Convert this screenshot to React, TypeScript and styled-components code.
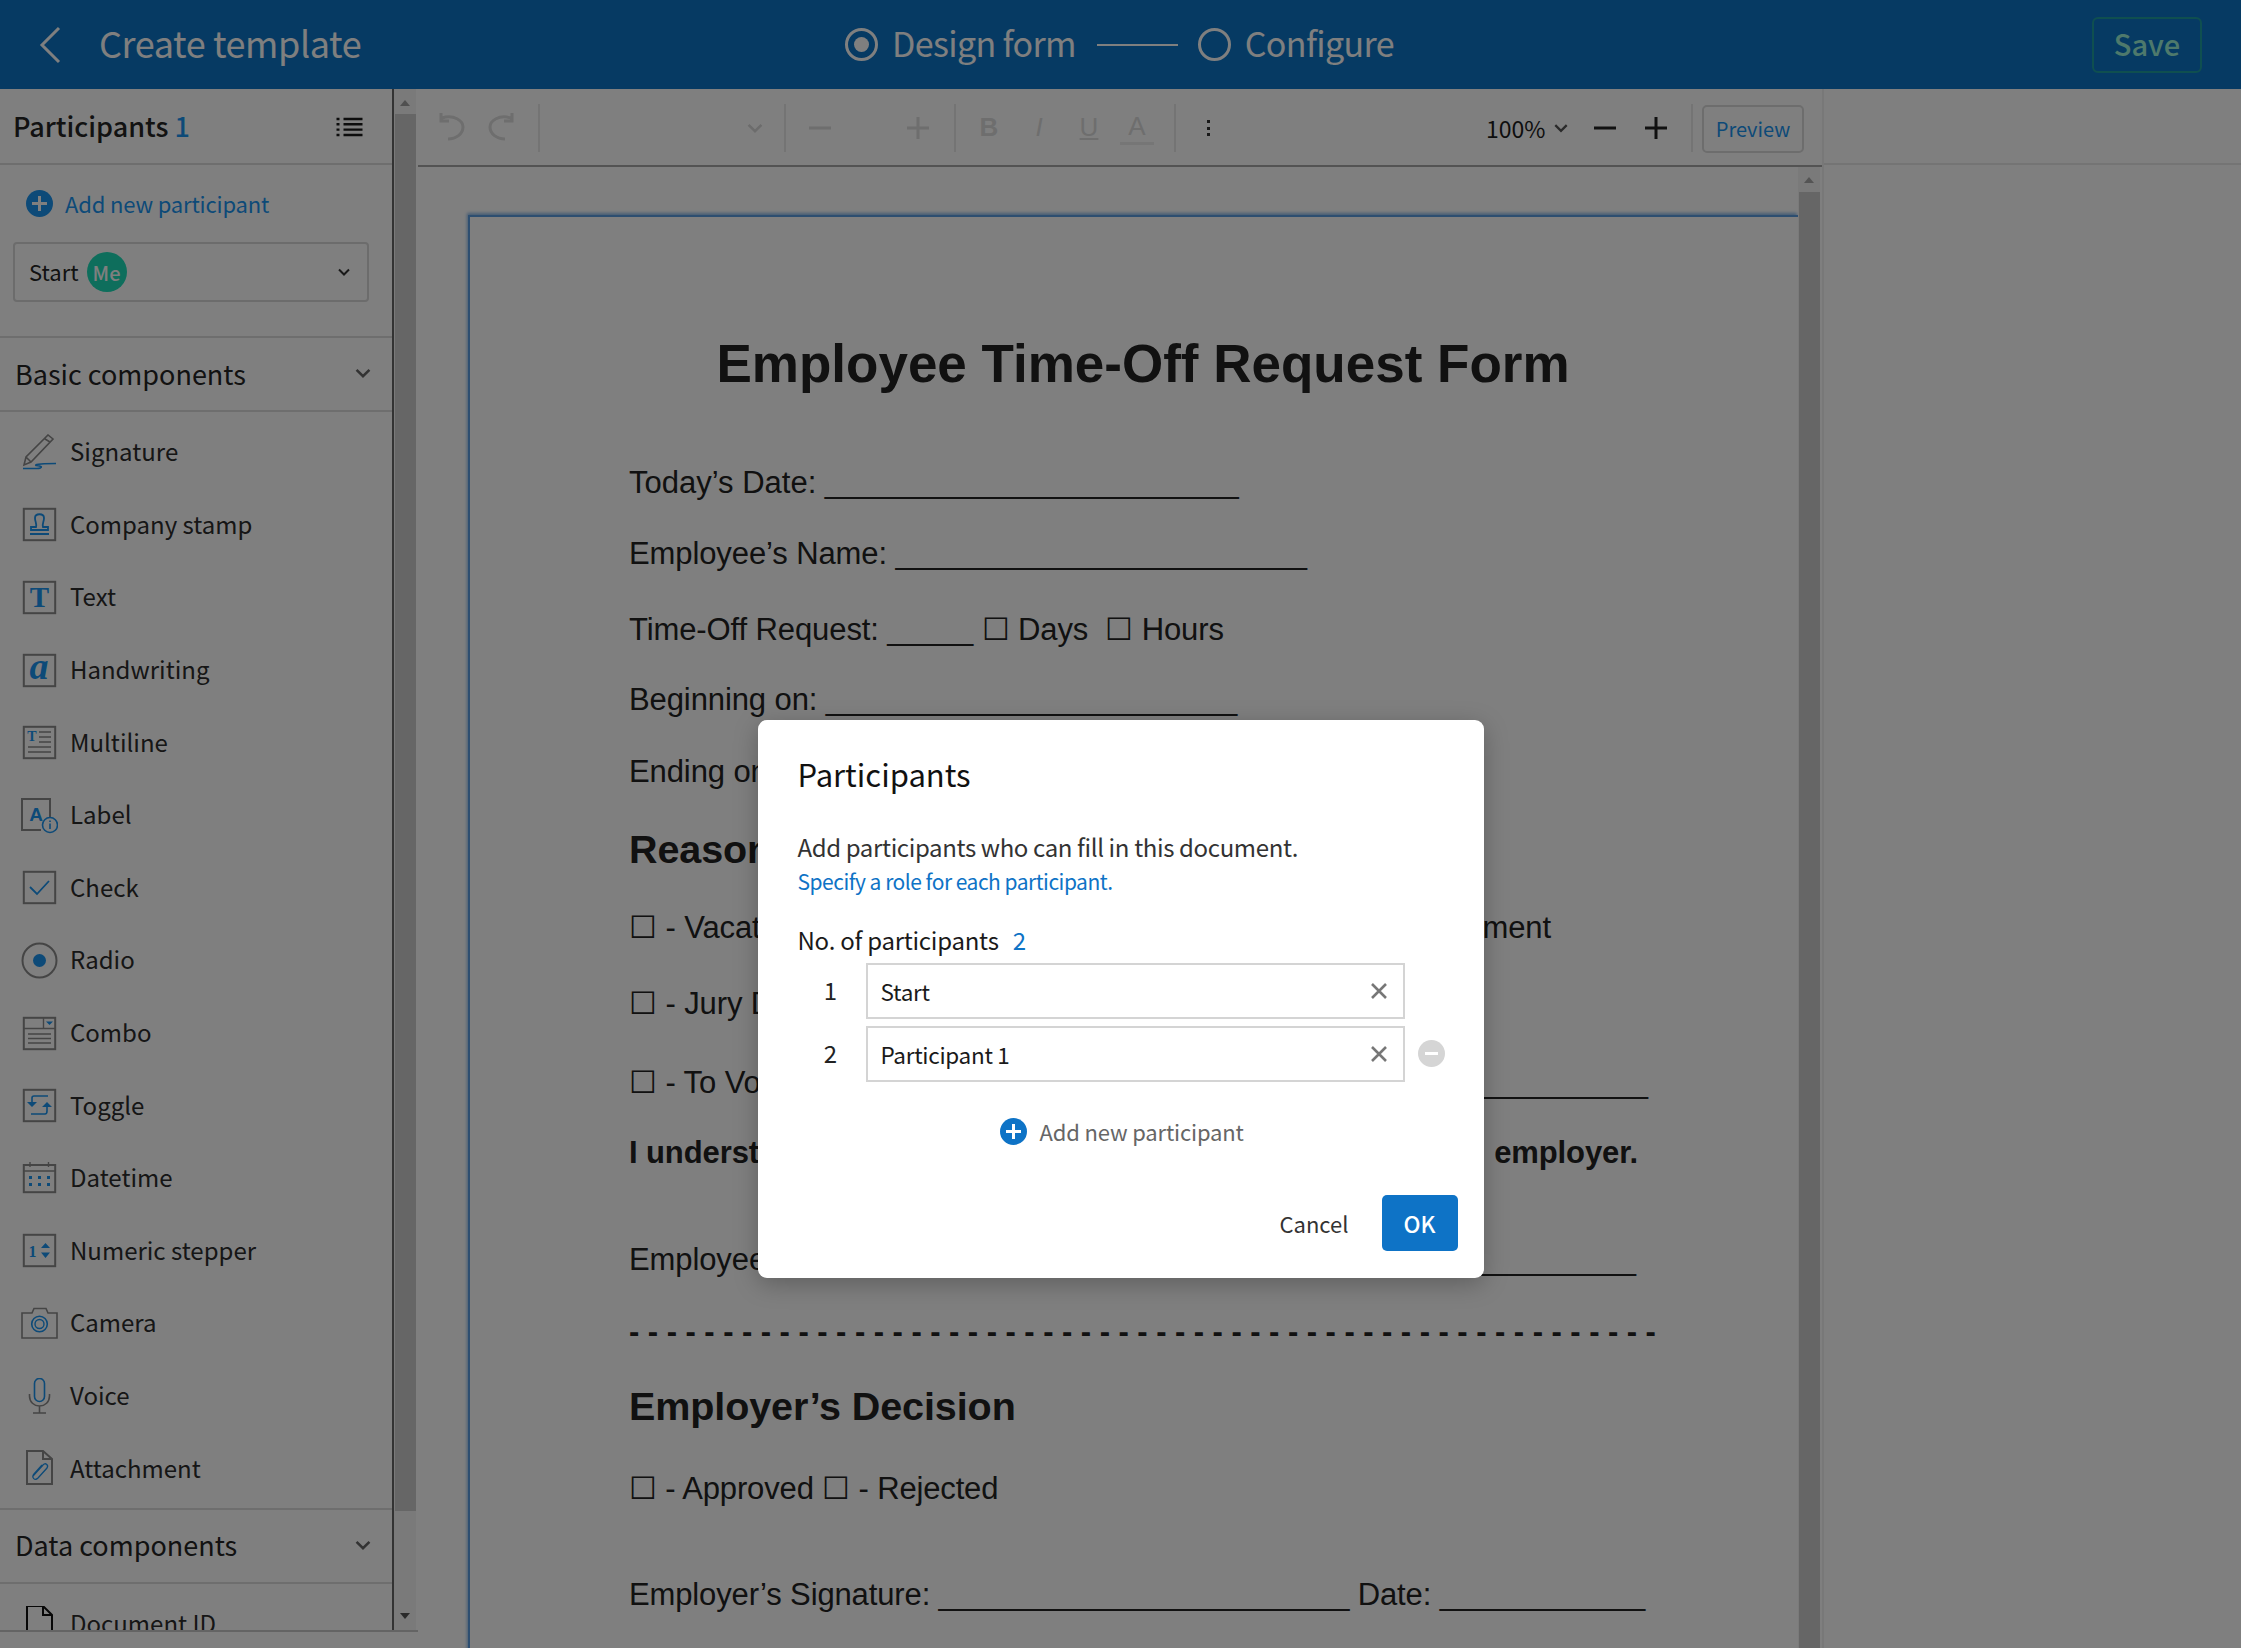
import styled, { createGlobalStyle } from 'styled-components'
import type { FC, ReactNode } from 'react'

// everything sits under a 50% black overlay, so source colours are twice what shows
const FRAME = '#8a8a8a'
const ACCENT = '#1a94f0'
const SANS = '"Noto Sans CJK JP", "Noto Sans", sans-serif'
const DOC = '"Liberation Sans", Arial, sans-serif'

const GlobalStyle = createGlobalStyle`
  html, body {
    margin: 0;
    padding: 0;
    background: #fff;
  }
  * {
    box-sizing: border-box;
  }
`

const Page = styled.div`
  position: relative;
  width: 2241px;
  height: 1648px;
  overflow: hidden;
  display: flex;
  flex-direction: column;
  font-family: ${SANS};
  color: #242424;
`

const Header = styled.header`
  height: 89px;
  flex: none;
  background: #0c74c6;
  display: grid;
  grid-template-columns: 845px 1fr auto;
  align-items: center;
  color: #fff;
`

const TitleGroup = styled.div`
  display: flex;
  align-items: center;
  padding-left: 38px;
  gap: 37px;
`

const HeaderTitle = styled.div`
  font-size: 36px;
  line-height: 44px;
  letter-spacing: -0.4px;
  white-space: nowrap;
  padding-bottom: 5px;
`

const Steps = styled.div`
  display: flex;
  align-items: center;
`

const StepLabel = styled.span`
  font-size: 34px;
  line-height: 44px;
  letter-spacing: -0.65px;
  margin-left: 14px;
  padding-bottom: 3px;
  white-space: nowrap;
`

const StepRadio = styled.span<{ $on?: boolean }>`
  width: 33px;
  height: 33px;
  border-radius: 50%;
  border: 3px solid #fff;
  display: flex;
  align-items: center;
  justify-content: center;

  &::after {
    content: '';
    width: 15px;
    height: 15px;
    border-radius: 50%;
    background: ${p => (p.$on ? '#fff' : 'transparent')};
  }
`

const StepLine = styled.span`
  width: 81px;
  height: 2px;
  background: #fff;
  margin: 0 20px 0 21px;
`

const SaveButton = styled.button`
  width: 110px;
  height: 56px;
  margin-right: 39px;
  border: 2px solid #1f9ea0;
  border-radius: 6px;
  background: transparent;
  color: #9cf2d8;
  font-family: ${SANS};
  font-size: 29px;
  font-weight: 500;
  padding: 0 0 3px;
`

const Workspace = styled.div`
  flex: 1;
  min-height: 0;
  display: flex;
`

const LeftColumn = styled.div`
  width: 418px;
  flex: none;
  display: flex;
  flex-direction: column;
`

const LeftMain = styled.div`
  height: 1543px;
  flex: none;
  display: flex;
  border-bottom: 2px solid #c8c8c8;
`

const Sidebar = styled.aside`
  width: 394px;
  flex: none;
  border-right: 2px solid #666;
  overflow: hidden;
`

const SideHead = styled.div`
  height: 76px;
  border-bottom: 2px solid #dcdcdc;
  padding: 0 29px 0 13px;
  display: flex;
  align-items: center;
  justify-content: space-between;
`

const SideTitle = styled.div`
  font-size: 27px;
  line-height: 40px;
  font-weight: 500;
`

const Count = styled.span`
  color: ${ACCENT};
  margin-left: 6px;
`

const ListIcon = styled.svg`
  width: 27px;
  height: 20px;
  margin-top: 2px;
  fill: none;
  stroke: #1a1a1a;
  stroke-width: 2.4;
`

const AddLink = styled.div`
  display: flex;
  align-items: center;
  gap: 12px;
  padding: 10px 0 0 26px;
  height: 66px;
  font-size: 22px;
  letter-spacing: -0.15px;
  color: ${ACCENT};
`

const PlusCircle = styled.span<{ $color: string }>`
  position: relative;
  width: 27px;
  height: 27px;
  flex: none;
  border-radius: 50%;
  background: ${p => p.$color};

  &::before,
  &::after {
    content: '';
    position: absolute;
    background: #fff;
    left: 6px;
    right: 6px;
    top: 12px;
    bottom: 12px;
  }
  &::after {
    left: 12px;
    right: 12px;
    top: 6px;
    bottom: 6px;
  }
`

const ParticipantSelect = styled.div`
  margin: 11px 23px 0 13px;
  height: 60px;
  border: 2px solid #d8d8d8;
  border-radius: 4px;
  padding: 0 16px 0 14px;
  display: flex;
  align-items: center;
  font-size: 22px;
`

const SelectName = styled.span`
  margin-top: -2px;
`

const MeBadge = styled.span`
  width: 40px;
  height: 40px;
  margin-left: 8px;
  border-radius: 50%;
  background: #1cdcb8;
  color: #fff;
  font-size: 20px;
  font-weight: 500;
  display: flex;
  align-items: center;
  justify-content: center;
`

const Spacer = styled.span`
  flex: 1;
`

const SectionHead = styled.div<{ $spaced?: boolean }>`
  height: 76px;
  margin-top: ${p => (p.$spaced ? '34px' : '0')};
  border-top: 2px solid #dcdcdc;
  border-bottom: 2px solid #dcdcdc;
  padding: 0 20px 2px 15px;
  display: flex;
  align-items: center;
  justify-content: space-between;
  font-size: 27px;
`

const ToolList = styled.div<{ $pad: number }>`
  padding: 4px 0 ${p => p.$pad}px;
`

const ToolRow = styled.div`
  height: 72.6px;
  padding-left: 21px;
  display: flex;
  align-items: center;
  gap: 12px;
  font-size: 24px;
  color: #2c2c2c;
`

const ToolName = styled.span`
  margin-top: -3px;
`

const ToolIcon = styled.svg`
  width: 37px;
  height: 37px;
  flex: none;
  fill: none;
  stroke: ${FRAME};
  stroke-width: 2;
`

const Rail = styled.div<{ $gap?: number }>`
  position: relative;
  width: 22px;
  flex: none;
  margin-right: ${p => p.$gap ?? 0}px;
  background: #f4f4f4;
`

const RailThumb = styled.div<{ $top: number; $bottom: number }>`
  position: absolute;
  left: 1px;
  right: 0;
  top: ${p => p.$top}px;
  bottom: ${p => p.$bottom}px;
  background: #cdcdcd;
`

const RailArrow = styled.div<{ $at: 'top' | 'bottom'; $offset: number; $color: string }>`
  position: absolute;
  left: 6px;
  ${p => p.$at}: ${p => p.$offset}px;
  width: 0;
  height: 0;
  border-left: 5px solid transparent;
  border-right: 5px solid transparent;
  ${p => (p.$at === 'top' ? 'border-bottom' : 'border-top')}: 6px solid ${p => p.$color};
`

const Editor = styled.main`
  width: 1404px;
  flex: none;
  display: flex;
  flex-direction: column;
`

const Toolbar = styled.div`
  height: 78px;
  flex: none;
  border-bottom: 2px solid #a6a6a6;
  display: flex;
  align-items: center;
  padding-top: 1px;
`

const ToolGroup = styled.div<{ $width: number }>`
  width: ${p => p.$width}px;
  height: 48px;
  flex: none;
  display: flex;
  align-items: center;
`

const ToolSep = styled.span`
  width: 2px;
  height: 48px;
  flex: none;
  background: #e8e8e8;
`

const FaintSvg = styled.svg`
  flex: none;
  fill: none;
  stroke: #dcdcdc;
  stroke-width: 3;
`

const DarkSvg = styled.svg<{ $left: number }>`
  flex: none;
  margin-left: ${p => p.$left}px;
  stroke: #222;
  stroke-width: 3;
`

const DotsSvg = styled.svg`
  fill: #333;
`

const FaintGlyph = styled.span<{ $w: number; $italic?: boolean; $bold?: boolean }>`
  width: ${p => p.$w}px;
  flex: none;
  text-align: center;
  font-family: ${DOC};
  font-size: 26px;
  color: #dcdcdc;
  font-style: ${p => (p.$italic ? 'italic' : 'normal')};
  font-weight: ${p => (p.$bold ? 700 : 400)};
`

const UnderGlyph = styled(FaintGlyph)`
  text-decoration: underline;
`

const ColorGlyph = styled(FaintGlyph)`
  border-bottom: 3px solid #ececec;
  line-height: 32px;
  margin-left: -2px;
`

const ChevronSlot = styled.span<{ $left: number; $right: number }>`
  display: flex;
  margin: 0 ${p => p.$right}px 0 ${p => p.$left}px;
`

const Zoom = styled.span`
  font-size: 23px;
  color: #1c1c1c;
  white-space: nowrap;
`

const PreviewButton = styled.button`
  width: 102px;
  height: 48px;
  padding: 0;
  margin: 2px 0 0 9px;
  border: 2px solid #dadada;
  border-radius: 5px;
  background: transparent;
  color: ${ACCENT};
  font-family: ${SANS};
  font-size: 20px;
`

const DocArea = styled.div`
  flex: 1;
  min-height: 0;
  display: flex;
  justify-content: flex-end;
`

const SheetWrap = styled.div`
  flex: 1;
  overflow: hidden;
  padding: 48px 0 0 50px;
`

const Sheet = styled.div`
  height: 1500px;
  background: #fff;
  border-top: 2px solid #5a9ce0;
  border-left: 2px solid #5a9ce0;
  box-shadow: -1px -2px 3px rgba(90, 156, 224, 0.7);
  padding: 117px 0 0 159px;
  font-family: ${DOC};
  color: #222;
`

const DocTitle = styled.div`
  width: 1000px;
  height: 60px;
  margin-left: 14px;
  text-align: center;
  font-size: 53px;
  line-height: 60px;
  font-weight: 700;
  white-space: nowrap;
`

const DocLine = styled.div<{ $top: number; $bold?: boolean; $size?: number; $width?: number; $tight?: number }>`
  height: 40px;
  width: ${p => (p.$width ? `${p.$width}px` : 'auto')};
  margin-top: ${p => p.$top}px;
  display: flex;
  justify-content: space-between;
  font-size: ${p => p.$size ?? 31}px;
  line-height: 40px;
  letter-spacing: ${p => p.$tight ?? -0.1}px;
  font-weight: ${p => (p.$bold ? 700 : 400)};
  white-space: pre;
`

const RightPanel = styled.aside`
  flex: 1;
  border-left: 2px solid #f0f0f0;
`

const RightHead = styled.div`
  height: 76px;
  border-bottom: 2px solid #e8e8e8;
`

const Overlay = styled.div`
  position: absolute;
  inset: 0;
  background: rgba(0, 0, 0, 0.5);
  display: flex;
  justify-content: center;
  align-items: flex-start;
  padding-top: 720px;
`

const Modal = styled.div`
  width: 726px;
  height: 558px;
  background: #fff;
  border-radius: 9px;
  box-shadow: 0 6px 24px rgba(0, 0, 0, 0.25);
  padding: 33px 27px 0 40px;
  display: flex;
  flex-direction: column;
`

const ModalTitle = styled.h2`
  margin: 0;
  font-size: 31px;
  line-height: 42px;
  font-weight: 400;
  color: #111;
`

const ModalText = styled.p`
  margin: 33px 0 0;
  font-size: 24px;
  line-height: 38px;
  letter-spacing: -0.37px;
  color: #333;
`

const ModalLink = styled.a`
  display: block;
  font-size: 21px;
  line-height: 30px;
  letter-spacing: -0.5px;
  color: #0e73c6;
`

const CountRow = styled.div`
  margin-top: 28px;
  height: 32px;
  font-size: 24px;
  line-height: 32px;
  letter-spacing: -0.25px;
  color: #1a1a1a;
  display: flex;
  gap: 14px;
`

const CountValue = styled.span`
  color: #0e73c6;
`

const FieldRow = styled.div`
  height: 56px;
  margin-top: 7px;
  display: flex;
  align-items: center;
`

const FieldNumber = styled.span`
  width: 68px;
  padding: 0 2px 3px 0;
  text-align: center;
  font-size: 24px;
  color: #222;
`

const FieldBox = styled.div`
  width: 539px;
  height: 56px;
  border: 2px solid #d4d4d4;
  padding: 0 14px 0 13px;
  display: flex;
  align-items: center;
  justify-content: space-between;
  font-size: 22.5px;
  letter-spacing: -0.3px;
  color: #1a1a1a;
`

const ClearX = styled.svg`
  width: 20px;
  height: 20px;
  stroke: #777;
  stroke-width: 2.6;
  fill: none;
`

const RemoveCircle = styled.span`
  position: relative;
  width: 27px;
  height: 27px;
  margin: -2px 0 0 13px;
  border-radius: 50%;
  background: #d5d5d5;

  &::after {
    content: '';
    position: absolute;
    left: 7px;
    right: 7px;
    top: 12px;
    height: 3px;
    background: #fff;
  }
`

const AddRow = styled.div`
  margin-top: 33px;
  height: 32px;
  padding-left: 202px;
  display: flex;
  align-items: center;
  gap: 13px;
  font-size: 22px;
  letter-spacing: -0.15px;
  color: #666;
`

const ModalActions = styled.div`
  margin: 48px -1px 0 0;
  display: flex;
  justify-content: flex-end;
  align-items: center;
  gap: 33px;
`

const CancelButton = styled.button`
  border: 0;
  padding: 0;
  background: none;
  font-family: ${SANS};
  font-size: 22px;
  color: #333;
`

const OkButton = styled.button`
  width: 76px;
  height: 56px;
  padding: 0;
  border: 0;
  border-radius: 5px;
  background: #0e73c6;
  color: #fff;
  font-family: ${SANS};
  font-size: 22.5px;
  font-weight: 500;
`

const Chevron: FC<{ size?: number; color?: string; width?: number }> = ({ size = 14, color = '#555', width = 2 }) => (
  <svg width={size} height={size} viewBox="0 0 14 14" fill="none" stroke={color} strokeWidth={width}>
    <path d="M2 4.5 L7 9.5 L12 4.5" />
  </svg>
)

const Frame = () => <rect x="0.8" y="0.8" width="31.4" height="31.4" />

const IconText: FC<{ x: number; y: number; size: number; family?: string; italic?: boolean; children: string }> = ({ x, y, size, family = 'Liberation Serif', italic, children }) => (
  <text x={x} y={y} fontSize={size} fontFamily={family} fontWeight="700" fontStyle={italic ? 'italic' : 'normal'} fill={ACCENT} stroke="none" textAnchor="middle">
    {children}
  </text>
)

const toolIcons: Record<string, ReactNode> = {
  Signature: (
    <>
      <path d="M1 29 L3 21 L25 -1 L30 3 L8 26 Z M3 21 L8 26 M22 3 L27 6" strokeWidth="1.6" />
      <path d="M0 32.5 H14 C20 32 20 30 13 29.5 C11 28 22 27.5 33 27.5" stroke={ACCENT} strokeWidth="1.6" />
    </>
  ),
  'Company stamp': (
    <>
      <Frame />
      <path d="M13 19 C14 15 12 14 12 10 C12 5 21 5 21 10 C21 14 19 15 20 19 H25 V22 H8 V19 Z M7 26 H26" stroke={ACCENT} strokeWidth="1.8" />
    </>
  ),
  Text: (
    <>
      <Frame />
      <IconText x={16.5} y={26} size={29}>T</IconText>
    </>
  ),
  Handwriting: (
    <>
      <Frame />
      <IconText x={16} y={25} size={38} italic>a</IconText>
    </>
  ),
  Multiline: (
    <>
      <Frame />
      <IconText x={9} y={15} size={14}>T</IconText>
      <path d="M16 6 H28 M16 11 H28 M16 16 H28 M5 21 H28 M5 26 H28" strokeWidth="1.4" />
    </>
  ),
  Label: (
    <>
      <path d="M27 18 V0 H-1 V31 H18" />
      <IconText x={13} y={22} size={19} family="Liberation Sans">A</IconText>
      <circle cx="27" cy="26" r="7.5" stroke={ACCENT} strokeWidth="1.6" />
      <path d="M27 24.5 V30 M27 21.5 V23" stroke={ACCENT} strokeWidth="1.6" />
    </>
  ),
  Check: (
    <>
      <Frame />
      <path d="M7 16 L14 23 L26 10" stroke={ACCENT} strokeWidth="1.8" />
    </>
  ),
  Radio: (
    <>
      <circle cx="16.5" cy="16.5" r="17" />
      <circle cx="16.5" cy="16.5" r="6.5" fill={ACCENT} stroke="none" />
    </>
  ),
  Combo: (
    <>
      <Frame />
      <path d="M0.8 11.5 H32 M20.5 1 V11.5 M5 17 H28 M5 21.5 H28 M5 26 H28" strokeWidth="1.4" />
      <path d="M23 4.5 H30 L26.5 8 Z" fill={ACCENT} stroke="none" />
    </>
  ),
  Toggle: (
    <>
      <Frame />
      <path d="M9 14 V9 C9 7.5 10 7 11 7 H25 M24 16 V22 C24 24 23 25 22 25 H8" stroke={ACCENT} strokeWidth="1.6" />
      <path d="M4 13 H14 L9 18 Z M19 18 H29 L24 13 Z" fill={ACCENT} stroke="none" />
    </>
  ),
  Datetime: (
    <>
      <rect x="0.8" y="3" width="31.4" height="27.2" />
      <path d="M0.8 9 H32 M7 0 V5 M25.5 0 V5" strokeWidth="1.4" />
      <path d="M6 14 h3 v3 h-3 Z M15 14 h3 v3 h-3 Z M24 14 h3 v3 h-3 Z M6 21 h3 v3 h-3 Z M15 21 h3 v3 h-3 Z M24 21 h3 v3 h-3 Z" fill={ACCENT} stroke="none" />
    </>
  ),
  'Numeric stepper': (
    <>
      <Frame />
      <IconText x={9.5} y={23} size={16}>1</IconText>
      <path d="M18 14 L22.5 9 L27 14 Z M18 18.5 H27 L22.5 24 Z" fill={ACCENT} stroke="none" />
    </>
  ),
  Camera: (
    <>
      <path d="M-1 6 H9 L11 1.5 H23 L25 6 H34 V31 H-1 Z" strokeWidth="1.6" />
      <circle cx="16.5" cy="17" r="7.8" stroke={ACCENT} strokeWidth="1.6" />
      <circle cx="16.5" cy="17" r="4.5" stroke={ACCENT} strokeWidth="1.4" />
    </>
  ),
  Voice: (
    <>
      <rect x="11.5" y="-1.5" width="10" height="23" rx="5" stroke={ACCENT} strokeWidth="1.6" />
      <path d="M6.5 14 V16 C6.5 22 11 26 16.5 26 C22 26 26.5 22 26.5 16 V14 M16.5 26 V33 M10 33 H23" strokeWidth="1.6" />
    </>
  ),
  Attachment: (
    <>
      <path d="M4 -1 H20 L29 7 V32 H4 Z M20 -1 V7 H29" />
      <path d="M10 24 L20 13 C22 10 26 13 24 16 L15 26 C12 29 8 26 11 22 L19 13" stroke={ACCENT} strokeWidth="1.3" />
    </>
  ),
  'Document ID': (
    <path d="M4 -2 H20 L29 7 V34 M4 -2 V34 M20 -2 V7 H29" stroke="#111" />
  ),
}

const basicComponents = [
  'Signature',
  'Company stamp',
  'Text',
  'Handwriting',
  'Multiline',
  'Label',
  'Check',
  'Radio',
  'Combo',
  'Toggle',
  'Datetime',
  'Numeric stepper',
  'Camera',
  'Voice',
  'Attachment',
]

type DocRow = { top: number; text: string; end?: string; bold?: boolean; size?: number; width?: number; tight?: number }

const under = (n: number) => '_'.repeat(n)

const docRows: DocRow[] = [
  { top: 69, text: `Today\u2019s Date: ${under(24)}`, tight: 0 },
  { top: 31, text: `Employee\u2019s Name: ${under(24)}` },
  { top: 36, text: `Time-Off Request: ${under(5)} \u2610 Days  \u2610 Hours`, tight: -0.1 },
  { top: 30, text: `Beginning on: ${under(24)}` },
  { top: 32, text: `Ending on: ${under(24)}` },
  { top: 37, text: 'Reason for Request:', bold: true, size: 39.5 },
  { top: 39, text: '\u2610 - Vacation', end: '\u2610 - Medical Appointment', width: 922 },
  { top: 36, text: '\u2610 - Jury Duty' },
  { top: 39, text: '\u2610 - To Vote', end: under(50), width: 1019 },
  { top: 30, text: 'I understand this request is subject to approval by', end: 'employer.', bold: true, width: 1009 },
  { top: 67, text: 'Employee\u2019s Signature:', end: under(40), width: 1007 },
  { top: 32, text: '- '.repeat(55).trim(), bold: true, tight: -0.055 },
  { top: 34, text: 'Employer\u2019s Decision', bold: true, size: 39.5 },
  { top: 43, text: '\u2610 - Approved \u2610 - Rejected', tight: -0.15 },
  { top: 66, text: `Employer\u2019s Signature: ${under(24)} Date: ${under(12)}`, tight: -0.13 },
]

export default function App() {
  return (
    <Page>
      <GlobalStyle />
      <Header>
        <TitleGroup>
          <svg width="24" height="38" viewBox="0 0 24 38" fill="none" stroke="#fff" strokeWidth="3">
            <path d="M21 2 L4 19 L21 36" />
          </svg>
          <HeaderTitle>Create template</HeaderTitle>
        </TitleGroup>
        <Steps>
          <StepRadio $on />
          <StepLabel>Design form</StepLabel>
          <StepLine />
          <StepRadio />
          <StepLabel>Configure</StepLabel>
        </Steps>
        <SaveButton>Save</SaveButton>
      </Header>

      <Workspace>
        <LeftColumn>
          <LeftMain>
            <Sidebar>
              <SideHead>
                <SideTitle>
                  Participants<Count>1</Count>
                </SideTitle>
                <ListIcon viewBox="0 0 26 20">
                  <path d="M7 2 H26 M7 7.3 H26 M7 12.6 H26 M7 18 H26 M0 2 H3 M0 7.3 H3 M0 12.6 H3 M0 18 H3" />
                </ListIcon>
              </SideHead>
              <AddLink>
                <PlusCircle $color={ACCENT} />
                Add new participant
              </AddLink>
              <ParticipantSelect>
                <SelectName>Start</SelectName>
                <MeBadge>Me</MeBadge>
                <Spacer />
                <Chevron size={14} color="#333" />
              </ParticipantSelect>
              <SectionHead $spaced>
                Basic components
                <Chevron size={18} color="#666" />
              </SectionHead>
              <ToolList $pad={3}>
                {basicComponents.map(name => (
                  <ToolRow key={name}>
                    <ToolIcon viewBox="-2 -2 37 37">{toolIcons[name]}</ToolIcon>
                    <ToolName>{name}</ToolName>
                  </ToolRow>
                ))}
              </ToolList>
              <SectionHead>
                Data components
                <Chevron size={18} color="#666" />
              </SectionHead>
              <ToolList $pad={0}>
                <ToolRow>
                  <ToolIcon viewBox="-2 -2 37 37">{toolIcons['Document ID']}</ToolIcon>
                  <ToolName>Document ID</ToolName>
                </ToolRow>
              </ToolList>
            </Sidebar>
            <Rail>
              <RailArrow $at="top" $offset={11} $color="#a0a0a0" />
              <RailThumb $top={25} $bottom={119} />
              <RailArrow $at="bottom" $offset={11} $color="#555" />
            </Rail>
          </LeftMain>
        </LeftColumn>

        <Editor>
          <Toolbar>
            <ToolGroup $width={120}>
              <FaintSvg width="120" height="30" viewBox="0 0 120 30">
                <path d="M24 5 C36 1 45 8 45 14 C45 21 38 26 30 26 M23 0 V8 H31" />
                <path d="M93 5 C81 1 72 8 72 14 C72 21 79 26 87 26 M94 0 V8 H86" />
              </FaintSvg>
            </ToolGroup>
            <ToolSep />
            <ToolGroup $width={244}>
              <Spacer />
              <Chevron size={18} color="#d8d8d8" />
              <ChevronSlot $left={0} $right={20} />
            </ToolGroup>
            <ToolSep />
            <ToolGroup $width={168}>
              <FaintSvg width="168" height="24" viewBox="0 0 168 24">
                <path d="M23 12 H45 M121 12 H143 M132 1 V23" />
              </FaintSvg>
            </ToolGroup>
            <ToolSep />
            <ToolGroup $width={218}>
              <FaintGlyph $w={66} $bold>B</FaintGlyph>
              <FaintGlyph $w={34} $italic>I</FaintGlyph>
              <UnderGlyph $w={66}>U</UnderGlyph>
              <ColorGlyph $w={34}>A</ColorGlyph>
            </ToolGroup>
            <ToolSep />
            <ToolGroup $width={310}>
              <DotsSvg width="70" height="20" viewBox="0 0 70 20">
                <path d="M31 2 h3 v3 h-3 Z M31 9 h3 v3 h-3 Z M31 15 h3 v3 h-3 Z" />
              </DotsSvg>
            </ToolGroup>
            <ToolGroup $width={205}>
              <Zoom>100%</Zoom>
              <ChevronSlot $left={8} $right={0}>
                <Chevron size={16} color="#555" />
              </ChevronSlot>
              <DarkSvg $left={23} width="26" height="24" viewBox="0 0 26 24">
                <path d="M2 12 H24" />
              </DarkSvg>
              <DarkSvg $left={26} width="24" height="24" viewBox="0 0 24 24">
                <path d="M1 12 H23 M12 1 V23" />
              </DarkSvg>
            </ToolGroup>
            <ToolSep />
            <PreviewButton>Preview</PreviewButton>
          </Toolbar>
          <DocArea>
            <SheetWrap>
              <Sheet>
                <DocTitle>Employee Time-Off Request Form</DocTitle>
                {docRows.map((row, i) => (
                  <DocLine key={i} $top={row.top} $bold={row.bold} $size={row.size} $width={row.width} $tight={row.tight}>
                    <span>{row.text}</span>
                    {row.end && <span>{row.end}</span>}
                  </DocLine>
                ))}
              </Sheet>
            </SheetWrap>
            <Rail $gap={2}>
              <RailArrow $at="top" $offset={10} $color="#a8a8a8" />
              <RailThumb $top={25} $bottom={-100} />
            </Rail>
          </DocArea>
        </Editor>

        <RightPanel>
          <RightHead />
        </RightPanel>
      </Workspace>

      <Overlay>
        <Modal>
          <ModalTitle>Participants</ModalTitle>
          <ModalText>Add participants who can fill in this document.</ModalText>
          <ModalLink>Specify a role for each participant.</ModalLink>
          <CountRow>
            No. of participants
            <CountValue>2</CountValue>
          </CountRow>
          <FieldRow>
            <FieldNumber>1</FieldNumber>
            <FieldBox>
              Start
              <ClearX viewBox="0 0 20 20">
                <path d="M3 3 L17 17 M17 3 L3 17" />
              </ClearX>
            </FieldBox>
          </FieldRow>
          <FieldRow>
            <FieldNumber>2</FieldNumber>
            <FieldBox>
              Participant 1
              <ClearX viewBox="0 0 20 20">
                <path d="M3 3 L17 17 M17 3 L3 17" />
              </ClearX>
            </FieldBox>
            <RemoveCircle />
          </FieldRow>
          <AddRow>
            <PlusCircle $color="#0e73c6" />
            Add new participant
          </AddRow>
          <ModalActions>
            <CancelButton>Cancel</CancelButton>
            <OkButton>OK</OkButton>
          </ModalActions>
        </Modal>
      </Overlay>
    </Page>
  )
}
